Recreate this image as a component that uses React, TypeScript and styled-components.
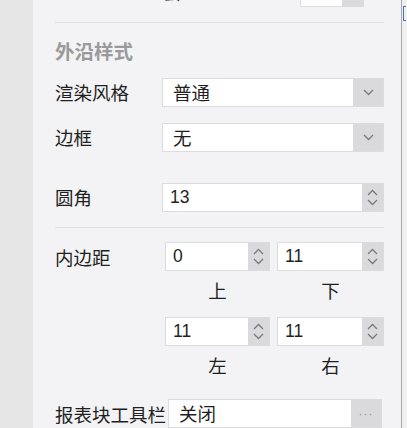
import React from "react";
import styled, { createGlobalStyle } from "styled-components";

const GlobalStyle = createGlobalStyle`
  html, body {
    margin: 0;
    padding: 0;
    background: #e6e6e6;
    overflow: hidden;
  }
  body {
    font-family: "Liberation Sans", "Noto Sans CJK SC", sans-serif;
    color: #1f1f1f;
  }
`;

const Page = styled.div`
  display: flex;
  width: 407px;
  height: 428px;
  overflow: hidden;
`;

const LeftStrip = styled.div`
  width: 33px;
  flex-shrink: 0;
  background: #e6e6e6;
`;

const Panel = styled.div`
  flex: 1;
  display: flex;
  flex-direction: column;
  background: #f3f3f5;
  padding: 0 17px 0 22px;
  border-right: 1px solid #a9a9a9;
`;

const RightEdge = styled.div`
  width: 5px;
  flex-shrink: 0;
  background: #f0f0f0;
  border-right: 2px solid #c4c4c4;
  position: relative;
`;

const Bracket = styled.div`
  position: absolute;
  left: 1px;
  top: 6px;
  width: 2px;
  height: 13px;
  border: 1px solid #4a6fb5;
  border-right: none;
`;

const TopStub = styled.div`
  display: flex;
  align-items: flex-end;
  height: 29px;
  margin-top: -22px;
`;

const StubLabel = styled.span`
  width: 245px;
  padding-left: 108px;
  box-sizing: border-box;
  font-family: "Noto Sans CJK SC", sans-serif;
  font-size: 18px;
  line-height: 29px;
  color: #444;
`;

const Divider = styled.div<{ $top: number }>`
  height: 1px;
  background: #e0e0e2;
  margin-top: ${(p) => p.$top}px;
`;

const Heading = styled.div`
  margin-top: 15px;
  font-family: "Noto Sans CJK SC", sans-serif;
  font-size: 19.5px;
  line-height: 25px;
  font-weight: 700;
  color: #9a9a9a;
`;

const Row = styled.div<{ $top: number; $label?: number }>`
  display: grid;
  grid-template-columns: ${(p) => p.$label ?? 107}px 1fr;
  align-items: center;
  margin-top: ${(p) => p.$top}px;
`;

const Label = styled.span`
  font-family: "Noto Sans CJK SC", sans-serif;
  font-size: 18.5px;
  line-height: 24px;
  color: #1f1f1f;
  white-space: nowrap;
`;

const Field = styled.div<{ $width?: number }>`
  display: flex;
  height: 29px;
  box-sizing: border-box;
  border: 1px solid #dcdcde;
  background: #fff;
  ${(p) => (p.$width ? `width: ${p.$width}px;` : "")}
`;

const Value = styled.span<{ $cjk?: boolean }>`
  flex: 1;
  padding-left: ${(p) => (p.$cjk ? 10 : 7)}px;
  font-family: ${(p) =>
    p.$cjk ? `"Noto Sans CJK SC", sans-serif` : `"Liberation Sans", sans-serif`};
  font-size: ${(p) => (p.$cjk ? 18.5 : 17.5)}px;
  line-height: 27px;
  color: #1f1f1f;
  white-space: nowrap;
`;

const SideButton = styled.div<{ $width: number }>`
  width: ${(p) => p.$width}px;
  flex-shrink: 0;
  background: #dadadd;
  display: flex;
  flex-direction: column;
  align-items: center;
  justify-content: center;
  gap: 3px;
  color: #7a7a7e;
`;

const Pair = styled.div`
  display: grid;
  grid-template-columns: 105px 107px;
  column-gap: 7px;
`;

const PairLabels = styled(Pair)<{ $top: number }>`
  margin-top: ${(p) => p.$top}px;
  margin-left: 110px;
`;

const SubLabel = styled.span`
  text-align: center;
  font-family: "Noto Sans CJK SC", sans-serif;
  font-size: 18.5px;
  line-height: 24px;
  color: #1f1f1f;
`;

const Dots = styled.span`
  font-family: "Liberation Sans", sans-serif;
  font-size: 12px;
  letter-spacing: 1px;
  color: #999;
  line-height: 12px;
`;

const ChevronDown = () => (
  <svg width="11" height="7" viewBox="0 0 11 7" fill="none">
    <path d="M1 1l4.5 4.5L10 1" stroke="currentColor" strokeWidth="1.3" />
  </svg>
);

const ChevronUp = () => (
  <svg width="11" height="7" viewBox="0 0 11 7" fill="none">
    <path d="M1 6l4.5-4.5L10 6" stroke="currentColor" strokeWidth="1.3" />
  </svg>
);

const Select = ({ value }: { value: string }) => (
  <Field>
    <Value $cjk>{value}</Value>
    <SideButton $width={30}>
      <ChevronDown />
    </SideButton>
  </Field>
);

const Spinner = ({ value }: { value: string }) => (
  <Field>
    <Value>{value}</Value>
    <SideButton $width={21}>
      <ChevronUp />
      <ChevronDown />
    </SideButton>
  </Field>
);

export default function App() {
  return (
    <Page>
      <GlobalStyle />
      <LeftStrip />
      <Panel>
        <TopStub>
          <StubLabel>去</StubLabel>
          <Field $width={64}>
            <Value />
            <SideButton $width={21}>
              <ChevronDown />
            </SideButton>
          </Field>
        </TopStub>
        <Divider $top={15} />
        <Heading>外沿样式</Heading>
        <Row $top={15}>
          <Label>渲染风格</Label>
          <Select value="普通" />
        </Row>
        <Row $top={16}>
          <Label>边框</Label>
          <Select value="无" />
        </Row>
        <Row $top={31}>
          <Label>圆角</Label>
          <Spinner value="13" />
        </Row>
        <Divider $top={15} />
        <Row $top={15} $label={110}>
          <Label>内边距</Label>
          <Pair>
            <Spinner value="0" />
            <Spinner value="11" />
          </Pair>
        </Row>
        <PairLabels $top={7}>
          <SubLabel>上</SubLabel>
          <SubLabel>下</SubLabel>
        </PairLabels>
        <Row $top={15} $label={110}>
          <span />
          <Pair>
            <Spinner value="11" />
            <Spinner value="11" />
          </Pair>
        </Row>
        <PairLabels $top={7}>
          <SubLabel>左</SubLabel>
          <SubLabel>右</SubLabel>
        </PairLabels>
        <Row $top={22} $label={113}>
          <Label>报表块工具栏</Label>
          <Field $width={214}>
            <Value $cjk>关闭</Value>
            <SideButton $width={30}>
              <Dots>···</Dots>
            </SideButton>
          </Field>
        </Row>
      </Panel>
      <RightEdge>
        <Bracket />
      </RightEdge>
    </Page>
  );
}
